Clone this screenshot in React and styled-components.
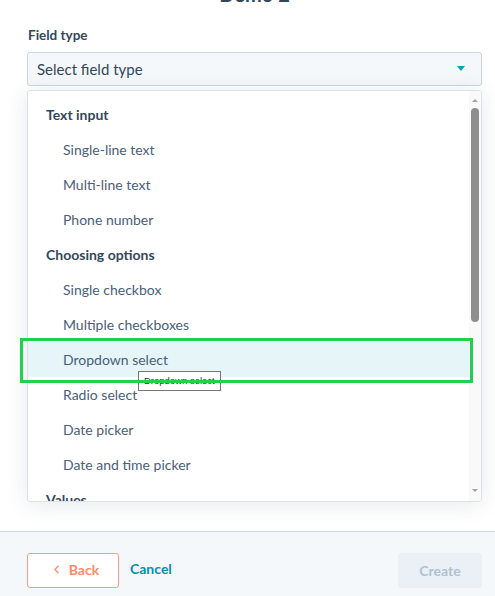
import React from 'react'
import styled, { createGlobalStyle } from 'styled-components'
import { ChevronLeft } from 'lucide-react'

const GlobalStyle = createGlobalStyle`
  html, body {
    margin: 0;
    padding: 0;
    background: #fff;
  }
  body {
    font-family: 'Lato', 'Liberation Sans', sans-serif;
    color: #33475b;
  }
  * {
    box-sizing: border-box;
  }
`

const groups = [
    { title: 'Text input', items: ['Single-line text', 'Multi-line text', 'Phone number'] },
    {
        title: 'Choosing options',
        items: ['Single checkbox', 'Multiple checkboxes', 'Dropdown select', 'Radio select', 'Date picker', 'Date and time picker'],
    },
    { title: 'Values', items: ['Number', 'Score', 'Calculation'] },
]

const App = () => {
    const active = 'Dropdown select'

    return (
        <Page>
            <GlobalStyle />
            <Main>
                <Title>Demo 2</Title>
                <Label>Field type</Label>
                <Select>
                    <Placeholder>Select field type</Placeholder>
                    <Caret />
                </Select>
                <Panel>
                    <List>
                        {groups.map((group) => (
                            <React.Fragment key={group.title}>
                                <GroupTitle>{group.title}</GroupTitle>
                                {group.items.map((item) => (
                                    <Option key={item} $active={item === active}>
                                        {item}
                                        {item === active && <Tip>{item}</Tip>}
                                    </Option>
                                ))}
                            </React.Fragment>
                        ))}
                    </List>
                    <Track>
                        <ArrowUp />
                        <Thumb />
                        <ArrowDown />
                    </Track>
                    <Annotation />
                </Panel>
            </Main>
            <Footer>
                <BackButton>
                    <ChevronLeft size={13} strokeWidth={2.4} />
                    Back
                </BackButton>
                <CancelLink>Cancel</CancelLink>
                <CreateButton>Create</CreateButton>
            </Footer>
        </Page>
    )
}

export default App

const Page = styled.div`
    display: flex;
    flex-direction: column;
    height: 100vh;
    overflow: hidden;
`

const Main = styled.div`
    flex: 1;
    display: flex;
    flex-direction: column;
    padding: 0 13px 0 27px;
    min-height: 0;
`

const Title = styled.h2`
    margin: -16px 0 0;
    height: 20px;
    font-size: 20px;
    line-height: 20px;
    font-weight: 700;
    text-align: center;
    color: #33475b;
`

const Label = styled.div`
    margin-top: 22px;
    height: 18px;
    font-size: 13.5px;
    line-height: 18px;
    font-weight: 700;
    padding-left: 1px;
`

const Select = styled.div`
    margin-top: 8px;
    height: 34px;
    display: flex;
    align-items: center;
    padding: 0 16px 1px 9px;
    background: #f5f8fa;
    border: 1px solid #cbd6e2;
    border-radius: 3px;
`

const Placeholder = styled.span`
    flex: 1;
    font-size: 15px;
    color: #33475b;
`

const Caret = styled.span`
    width: 0;
    height: 0;
    border-left: 4.5px solid transparent;
    border-right: 4.5px solid transparent;
    border-top: 5px solid #00a4bd;
`

const Panel = styled.div`
    position: relative;
    margin-top: 4px;
    height: 412px;
    display: flex;
    background: #fff;
    border: 1px solid #dbe2ea;
    border-radius: 3px;
    box-shadow: 0 2px 22px rgba(45, 62, 80, 0.12);
`

const List = styled.div`
    flex: 1;
    overflow: hidden;
    padding-top: 6px;
`

const GroupTitle = styled.div`
    height: 35px;
    line-height: 35px;
    padding-left: 18px;
    font-size: 14px;
    font-weight: 700;
    color: #33475b;
`

const Option = styled.div`
    position: relative;
    height: 35px;
    line-height: 35px;
    padding-left: 35px;
    font-size: 14px;
    color: #4a6078;
    background: ${(p) => (p.$active ? '#e5f5f8' : 'transparent')};
    z-index: ${(p) => (p.$active ? 2 : 'auto')};
`

const Tip = styled.span`
    position: absolute;
    left: 110px;
    top: 29px;
    height: 20px;
    padding: 0 5px;
    line-height: 18px;
    font-family: 'Liberation Sans', Arial, sans-serif;
    font-size: 9.5px;
    color: #333;
    background: #fff;
    border: 1px solid #767676;
    white-space: nowrap;
`

const Track = styled.div`
    width: 12px;
    display: flex;
    flex-direction: column;
    align-items: center;
    background: #f9f9f9;
    padding: 8px 0 9px;
`

const ArrowUp = styled.span`
    width: 0;
    height: 0;
    border-left: 3.5px solid transparent;
    border-right: 3.5px solid transparent;
    border-bottom: 3.5px solid #a3a3a3;
`

const ArrowDown = styled.span`
    margin-top: auto;
    width: 0;
    height: 0;
    border-left: 3.5px solid transparent;
    border-right: 3.5px solid transparent;
    border-top: 3.5px solid #a3a3a3;
`

const Thumb = styled.span`
    margin-top: 6px;
    width: 8px;
    height: 214px;
    border-radius: 4px;
    background: #8e8e8e;
`

const Annotation = styled.span`
    position: absolute;
    left: -8px;
    top: 247px;
    width: 453px;
    height: 45px;
    border: 3px solid #1fd14d;
    pointer-events: none;
    z-index: 3;
`

const Footer = styled.div`
    height: 65px;
    flex-shrink: 0;
    display: flex;
    align-items: flex-start;
    padding: 21px 13px 0 27px;
    background: #f5f8fa;
    border-top: 1px solid #cbd6e2;
`

const BackButton = styled.button`
    width: 92px;
    height: 35px;
    display: flex;
    align-items: center;
    justify-content: center;
    gap: 6px;
    padding: 0 0 2px 3px;
    font-family: 'Lato', 'Liberation Sans', sans-serif;
    font-size: 14px;
    font-weight: 700;
    color: #ff8a6b;
    background: #fff;
    border: 1px solid #ff9a80;
    border-radius: 3px;
`

const CancelLink = styled.span`
    margin-left: 11px;
    height: 35px;
    line-height: 32px;
    font-size: 14px;
    font-weight: 700;
    color: #0091ae;
`

const CreateButton = styled.button`
    margin-left: auto;
    width: 84px;
    height: 35px;
    padding-bottom: 2px;
    font-family: 'Lato', 'Liberation Sans', sans-serif;
    font-size: 14px;
    font-weight: 700;
    color: #b0c1d4;
    background: #eaf0f6;
    border: 1px solid #eaf0f6;
    border-radius: 3px;
`
